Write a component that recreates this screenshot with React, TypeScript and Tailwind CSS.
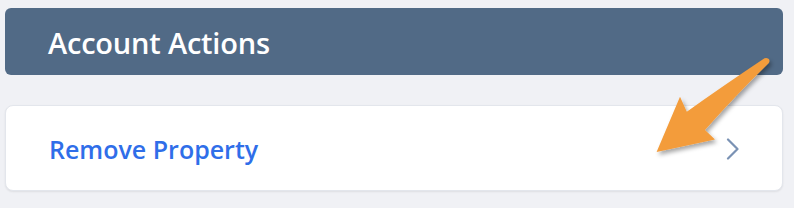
import React from "react";

export default function App() {
  return (
    <div
      className="relative w-[794px] h-[208px] bg-[#f0f1f5] pl-[5px] pr-[11px] pt-[8px] overflow-hidden"
      style={{ fontFamily: '"Open Sans", "Noto Sans", sans-serif' }}
    >
      <div className="h-[67px] rounded-[6px] bg-[#516a86] flex items-center pl-[43px]">
        <h2 className="text-white text-[29px] font-semibold leading-none tracking-[-0.2px] mt-[2px]">
          Account Actions
        </h2>
      </div>
      <div className="mt-[30px] h-[86px] rounded-[8px] bg-white border border-[#e3e6ec] shadow-[0_1px_2px_rgba(0,0,0,0.08)] flex items-center justify-between pl-[43px] pr-[42px]">
        <span className="text-[#2f6ee9] text-[25px] font-semibold leading-none mt-[2px]">
          Remove Property
        </span>
        <svg width="14" height="22" viewBox="0 0 14 22" fill="none" className="mt-[2px]">
          <path d="M2 1.5 L11.5 11 L2 20.5" stroke="#7a92b4" strokeWidth="2.2" strokeLinecap="round" strokeLinejoin="round" />
        </svg>
      </div>
      <svg
        className="absolute left-0 top-0 pointer-events-none"
        width="794"
        height="208"
        viewBox="0 0 794 208"
      >
        <defs>
          <filter id="sh" x="-20%" y="-20%" width="140%" height="140%">
            <feDropShadow dx="2" dy="3" stdDeviation="2" floodColor="#000" floodOpacity="0.35" />
          </filter>
        </defs>
        <path
          d="M764.5 58.3 Q720 88 686.8 111.8 L680 96.8 L656.6 152 L715 139.4 L705 130 Q735 96 768.8 63 Q770.5 60 768 58.5 Q766.5 57.5 764.5 58.3 Z"
          fill="#f39c3b"
          filter="url(#sh)"
        />
      </svg>
    </div>
  );
}
